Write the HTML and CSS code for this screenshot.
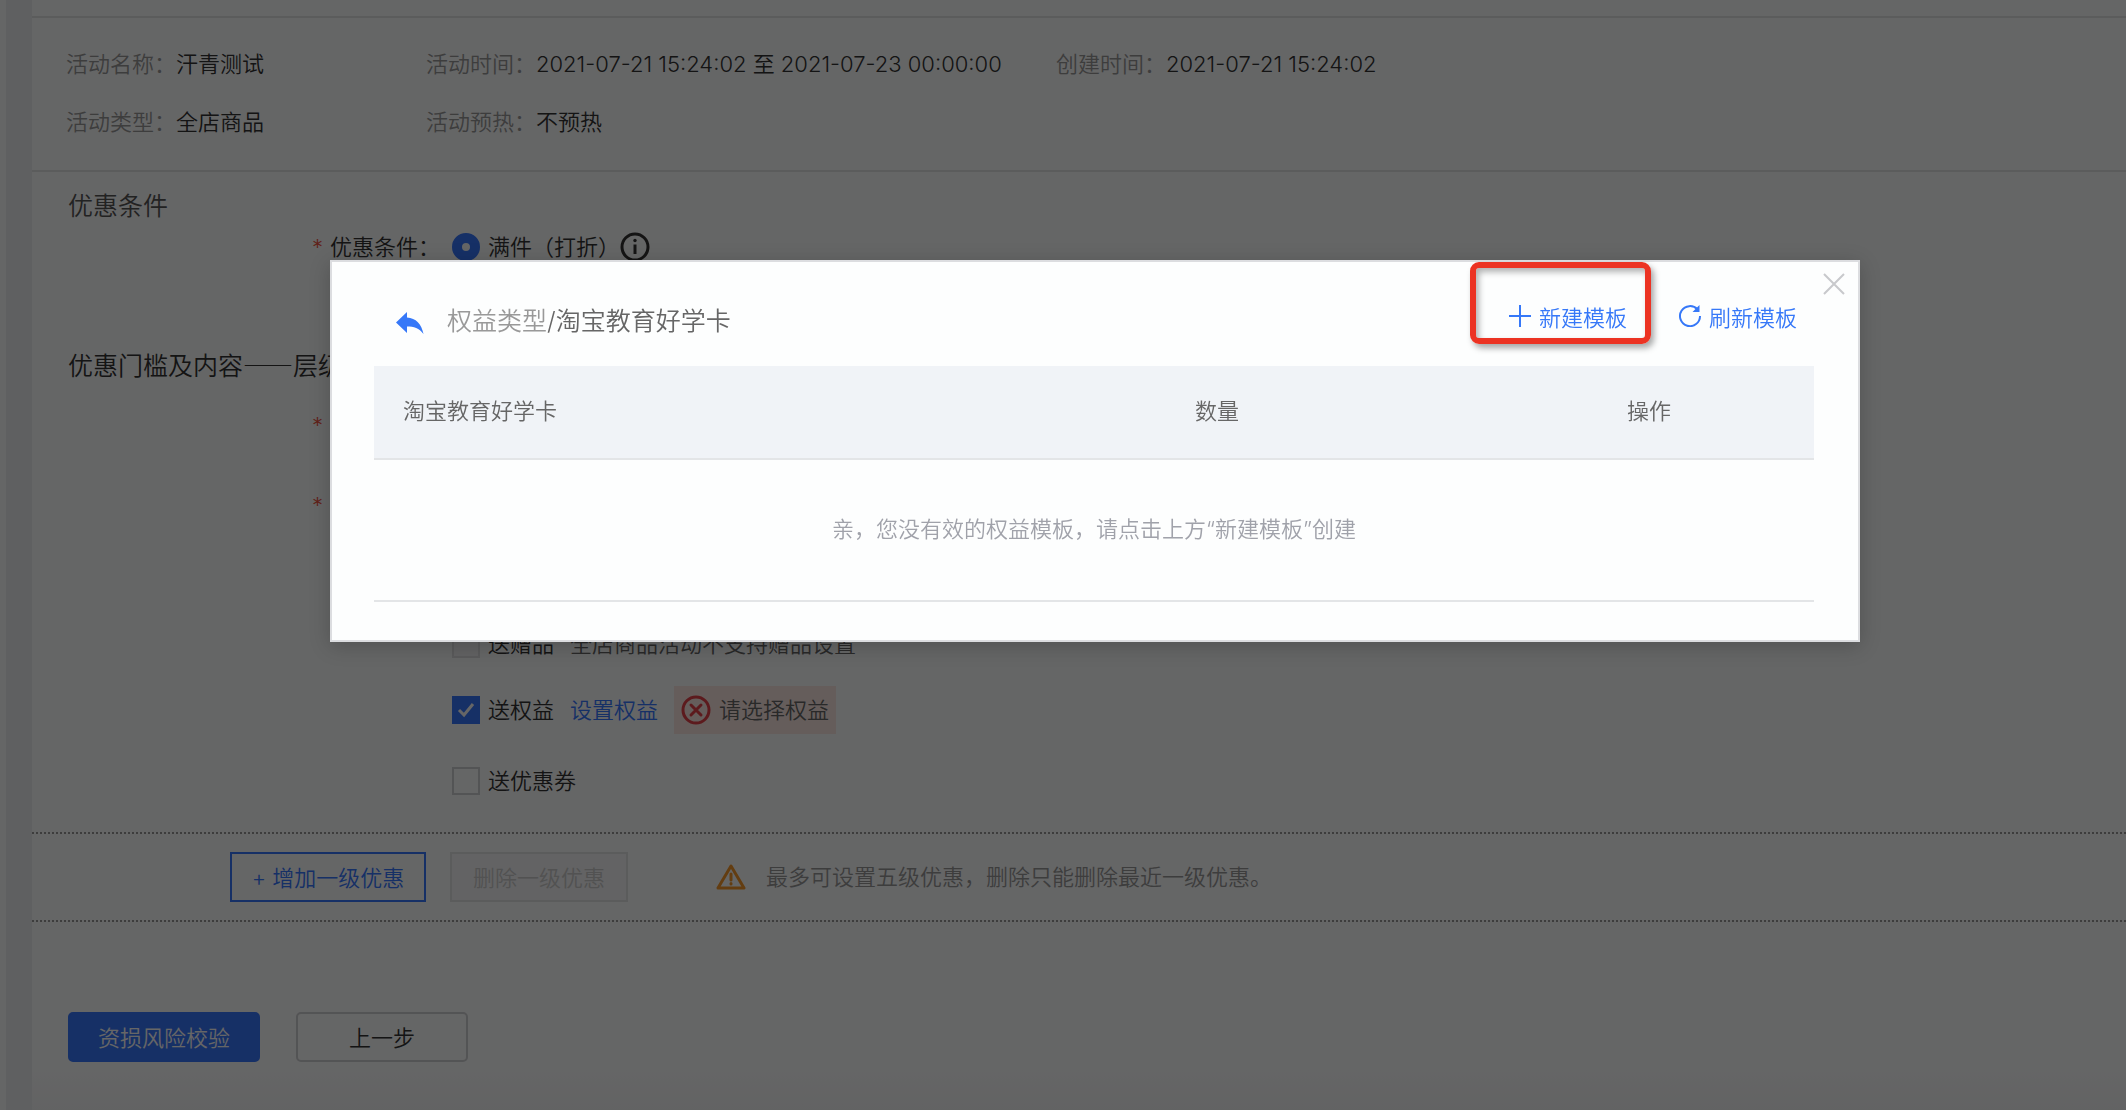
FILE: index.html
```html
<!DOCTYPE html>
<html lang="zh-CN">
<head>
    <meta charset="UTF-8">
    <meta name="viewport" content="width=device-width, initial-scale=1.0">
    <title>优惠活动设置</title>
    <link rel="stylesheet" href="styles.css">
</head>
<body>
    <div class="page">
        <div class="gutter"></div>
        <main class="main">
            <div class="topbar"></div>

            <dl class="info">
                <div class="info-item"><dt>活动名称：</dt><dd>汗青测试</dd></div>
                <div class="info-item"><dt>活动时间：</dt><dd>2021-07-21 15:24:02 至 2021-07-23 00:00:00</dd></div>
                <div class="info-item"><dt>创建时间：</dt><dd>2021-07-21 15:24:02</dd></div>
                <div class="info-item"><dt>活动类型：</dt><dd>全店商品</dd></div>
                <div class="info-item"><dt>活动预热：</dt><dd>不预热</dd></div>
            </dl>

            <form class="promo">
                <h2 class="section-title light">优惠条件</h2>
                <div class="form-row row-condition">
                    <div class="form-label"><span class="required">*</span>优惠条件：</div>
                    <input class="radio" type="radio" id="byCount" name="condition" checked>
                    <label for="byCount">满件（打折）</label>
                    <svg class="icon-info" viewBox="0 0 30 30" fill="none" stroke="#333" stroke-width="3">
                        <circle cx="15" cy="15" r="13"/>
                        <path d="M15 12.500V22"/>
                        <circle cx="15" cy="8.500" r="1.700" fill="#333" stroke="none"/>
                    </svg>
                </div>

                <h2 class="section-title row-level">优惠门槛及内容——层级一</h2>
                <div class="form-row row-threshold">
                    <div class="form-label"><span class="required">*</span></div>
                </div>
                <div class="form-row row-content">
                    <div class="form-label"><span class="required">*</span></div>
                </div>

                <div class="form-row row-gift">
                    <div class="form-label"></div>
                    <input class="check" type="checkbox" id="gift" disabled>
                    <label for="gift">送赠品</label>
                    <span class="hint">全店商品活动不支持赠品设置</span>
                </div>
                <div class="form-row row-benefit">
                    <div class="form-label"></div>
                    <input class="check" type="checkbox" id="benefit" checked>
                    <label for="benefit">送权益</label>
                    <a class="link" href="#">设置权益</a>
                    <span class="error">
                        <svg class="icon-error" viewBox="0 0 30 30" fill="none" stroke="#e5424a" stroke-width="3" stroke-linecap="round">
                            <circle cx="15" cy="15" r="13"/>
                            <path d="M10 10l10 10M20 10L10 20"/>
                        </svg>
                        请选择权益
                    </span>
                </div>
                <div class="form-row row-coupon">
                    <div class="form-label"></div>
                    <input class="check" type="checkbox" id="coupon">
                    <label for="coupon">送优惠券</label>
                </div>

                <div class="levels">
                    <button type="button" class="btn btn-add">+ 增加一级优惠</button>
                    <button type="button" class="btn btn-remove" disabled>删除一级优惠</button>
                    <svg class="icon-warn" viewBox="0 0 30 26" fill="none" stroke="#f79a2c" stroke-width="3" stroke-linejoin="round" stroke-linecap="round">
                        <path d="M15 2L28 24H2Z"/>
                        <path d="M15 10v6M15 19.500v.5"/>
                    </svg>
                    <p class="tip">最多可设置五级优惠，删除只能删除最近一级优惠。</p>
                </div>

                <div class="actions">
                    <button type="button" class="btn btn-primary">资损风险校验</button>
                    <button type="button" class="btn btn-default">上一步</button>
                </div>
            </form>
        </main>
    </div>

    <div class="mask"></div>

    <!-- Benefit template dialog -->
    <div class="modal" role="dialog" aria-labelledby="modalTitle">
        <button type="button" class="close" aria-label="关闭">
            <svg viewBox="0 0 22 22" fill="none" stroke="#c8c9cc" stroke-width="2">
                <path d="M1 1l20 20M21 1L1 21"/>
            </svg>
        </button>
        <div class="modal-header">
            <button type="button" class="back" aria-label="返回">
                <svg viewBox="0 0 28 22" fill="#3678f8">
                    <path d="M11 0V5.500C20 6 25.500 12 27.500 22C23 16 18 14.500 11 14.500V21L0 10.500Z"/>
                </svg>
            </button>
            <h1 class="modal-title" id="modalTitle"><span>权益类型</span>/淘宝教育好学卡</h1>
            <button type="button" class="tool highlight">
                <svg viewBox="0 0 22 22" fill="none" stroke="#3678f8" stroke-width="2">
                    <path d="M11 0v22M0 11h22"/>
                </svg>
                新建模板
            </button>
            <button type="button" class="tool">
                <svg viewBox="0 0 22 22" fill="none" stroke="#3678f8" stroke-width="2">
                    <path d="M18.500 4.500A10 10 0 1 0 21 11"/>
                    <path d="M20.500 0V7H13.500Z" fill="#3678f8" stroke="none"/>
                </svg>
                刷新模板
            </button>
        </div>
        <table class="templates">
            <thead>
                <tr>
                    <th class="col-name">淘宝教育好学卡</th>
                    <th class="col-count">数量</th>
                    <th class="col-action">操作</th>
                </tr>
            </thead>
            <tbody>
                <tr>
                    <td colspan="3">亲，您没有效的权益模板，请点击上方“新建模板”创建</td>
                </tr>
            </tbody>
        </table>
    </div>
</body>
</html>
```
FILE: styles.css
```css
* {
    box-sizing: border-box;
}

body {
    margin: 0;
    font-family: Inter, "Noto Sans CJK SC", sans-serif;
    font-size: 22px;
    font-weight: 350;
    line-height: 30px;
    color: #333;
    background-color: #fdfeff;
}

h1, h2, p, dl, dd {
    margin: 0;
    font-weight: 350;
}

button, input {
    margin: 0;
    font: inherit;
}

svg {
    display: block;
    flex: none;
}

/* Page behind the dialog */
.page {
    display: flex;
    min-height: 100vh;
    padding-left: 6px;
}

.gutter {
    flex: 0 0 26px;
    background-color: #eeeff3;
}

.main {
    flex: 1;
    min-width: 0;
    background: linear-gradient(to top, #f6f7f8, #fdfeff 40px);
}

.topbar {
    height: 18px;
    border-bottom: 2px solid #e4e5e7;
}

.info {
    display: grid;
    grid-template-columns: 360px 630px 1fr;
    row-gap: 28px;
    padding: 31px 34px 33px;
    border-bottom: 2px solid #e4e5e7;
}

.info-item {
    display: flex;
    white-space: nowrap;
}

.info dt {
    color: #999;
}

.section-title {
    padding-left: 36px;
    font-family: "Noto Sans CJK SC", sans-serif;
    font-size: 25px;
    line-height: 34px;
}

.light {
    margin-top: 15px;
    color: #555;
}

.form-row {
    display: flex;
    align-items: center;
    height: 30px;
}

.form-label {
    display: flex;
    flex: 0 0 420px;
    padding-left: 280px;
}

.required {
    width: 18px;
    color: #f0533f;
}

.row-condition {
    margin-top: 11px;
}

.row-level {
    margin-top: 85px;
}

.row-threshold {
    margin-top: 29px;
}

.row-content {
    margin-top: 50px;
}

.row-gift {
    margin-top: 109px;
}

.row-benefit {
    height: 48px;
    margin-top: 27px;
}

.row-coupon {
    margin-top: 32px;
}

.radio, .check {
    flex: none;
    appearance: none;
    width: 28px;
    height: 28px;
    margin-right: 8px;
    border: 2px solid #d0d1d4;
}

.radio {
    border-radius: 50%;
}

.radio:checked {
    border: 10px solid #3778ff;
}

.check:disabled {
    background-color: #f5f6f8;
    border-color: #e0e1e4;
}

.check:checked {
    border: none;
    background: #3778ff url("data:image/svg+xml,%3Csvg xmlns='http://www.w3.org/2000/svg' viewBox='0 0 28 28' fill='none' stroke='white' stroke-width='3'%3E%3Cpath d='M7 14l5 5 9-11'/%3E%3C/svg%3E");
}

.icon-info, .icon-error {
    width: 30px;
    height: 30px;
}

.hint, .link {
    margin-left: 16px;
}

.hint {
    color: #666;
}

.link {
    color: #3778ff;
    text-decoration: none;
}

.error {
    display: flex;
    align-items: center;
    gap: 8px;
    height: 48px;
    margin-left: 16px;
    padding: 0 7px;
    color: #666;
    background-color: #fde9e4;
}

/* Add / remove level bar */
.levels {
    display: flex;
    align-items: center;
    height: 90px;
    margin-top: 36px;
    padding-left: 198px;
    border-top: 2px dotted #999;
    border-bottom: 2px dotted #999;
}

.btn {
    height: 50px;
    padding: 2px 0 0;
    color: #333;
    background-color: transparent;
    border: 2px solid #d0d1d4;
    cursor: pointer;
}

.btn-add {
    width: 196px;
    color: #3778ff;
    border-color: #3778ff;
}

.btn-remove {
    width: 178px;
    margin-left: 24px;
    color: #ccc;
    background-color: #f7f8fa;
    border-color: #e4e5e7;
}

.icon-warn {
    width: 30px;
    height: 26px;
    margin-left: 88px;
}

.tip {
    margin-left: 20px;
    color: #999;
}

.actions {
    display: flex;
    gap: 36px;
    padding: 90px 36px 48px;
}

.btn-primary {
    width: 192px;
    color: #fff;
    background-color: #3778ff;
    border-color: #3778ff;
    border-radius: 5px;
}

.btn-default {
    width: 172px;
    border-radius: 5px;
}

.mask {
    position: fixed;
    inset: 0;
    background-color: rgba(0, 0, 0, 0.6);
}

/* Dialog */
.modal {
    position: absolute;
    top: 260px;
    left: 330px;
    right: 266px;
    padding: 0 44px 38px 42px;
    background-color: #fdfefe;
    border: 2px solid #dcdde0;
    box-shadow: 0 4px 20px rgba(0, 0, 0, 0.2);
}

.close, .back, .tool {
    padding: 0;
    background: none;
    border: none;
    cursor: pointer;
}

.close {
    position: absolute;
    top: 11px;
    right: 13px;
}

.close svg, .tool svg {
    width: 22px;
    height: 22px;
}

.back svg {
    width: 28px;
    height: 22px;
}

.modal-header {
    display: flex;
    align-items: center;
    height: 104px;
    padding: 0 17px 0 22px;
}

.modal-title {
    flex: 1;
    margin-left: 23px;
    padding-top: 14px;
    font-size: 25px;
    line-height: 34px;
    color: #666;
}

.modal-title span {
    color: #999;
}

.back {
    padding-top: 18px;
}

.tool {
    display: flex;
    align-items: center;
    align-self: flex-start;
    gap: 8px;
    height: 82px;
    padding-top: 30px;
    color: #3678f8;
    white-space: nowrap;
}

.tool svg {
    margin-bottom: 4px;
}

/* Red frame round the entry the seller has to click */
.highlight {
    margin-right: 28px;
    padding: 30px 18px 0 33px;
    border: 6px solid #ec3323;
    border-radius: 9px;
    box-shadow: 3px 4px 6px rgba(0, 0, 0, 0.35), inset 3px 4px 6px rgba(0, 0, 0, 0.3);
}

.templates {
    width: 100%;
    border-collapse: separate;
    border-spacing: 0;
    table-layout: fixed;
}

.templates th {
    height: 94px;
    padding: 0 0 2px 29px;
    font-weight: 350;
    text-align: left;
    color: #666;
    background-color: #f0f3f7;
    border-bottom: 2px solid #e3e5e7;
}

.col-name {
    width: 55%;
}

.col-count {
    width: 30%;
}

.col-action {
    width: 15%;
}

.templates td {
    height: 142px;
    padding: 0 0 2px;
    text-align: center;
    color: #a0a2aa;
    border-bottom: 2px solid #e3e5e7;
}
```
